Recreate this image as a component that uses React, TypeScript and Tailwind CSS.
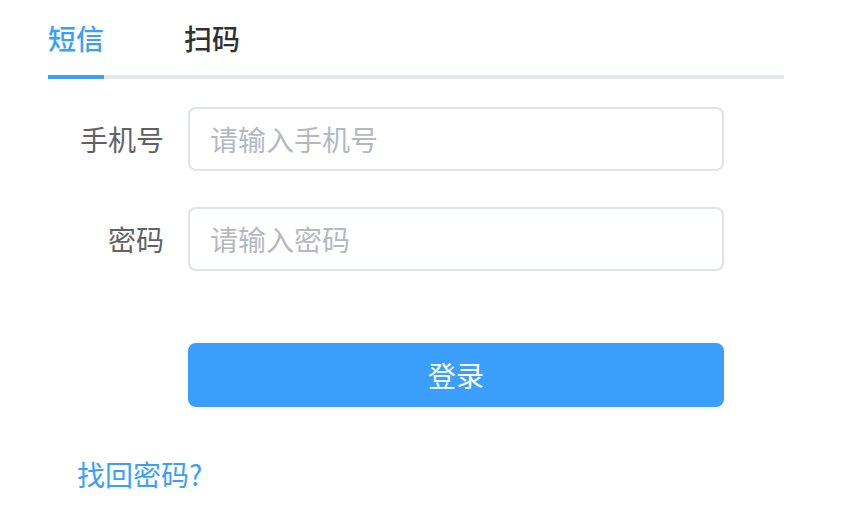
import { useState } from "react";

const font = { fontFamily: '"Noto Sans CJK SC", "Noto Sans", sans-serif' };

export default function App() {
  const [tab, setTab] = useState(0);
  const [phone, setPhone] = useState("");
  const [password, setPassword] = useState("");

  return (
    <div className="h-[522px] w-[846px] bg-white" style={font}>
      <div className="w-[784px] pl-[48px]">
        <div className="flex pt-[18px] pb-[17px] text-[28px] leading-[40px] font-medium">
          <button
            type="button"
            onClick={() => setTab(0)}
            className={tab === 0 ? "w-[56px] text-left text-[#3a9ffc]" : "w-[56px] text-left text-[#303133]"}
          >
            短信
          </button>
          <button
            type="button"
            onClick={() => setTab(1)}
            className={tab === 1 ? "ml-[80px] text-left text-[#3a9ffc]" : "ml-[80px] text-left text-[#303133]"}
          >
            扫码
          </button>
        </div>
        <div className="flex h-[4px]">
          <div className={tab === 0 ? "w-[56px] bg-[#3a9ffc]" : "w-[56px] bg-[#e4e7ed]"} />
          <div className="w-[80px] bg-[#e4e7ed]" />
          <div className={tab === 1 ? "w-[56px] bg-[#3a9ffc]" : "w-[56px] bg-[#e4e7ed]"} />
          <div className="flex-1 bg-[#e4e7ed]" />
        </div>
      </div>

      <div className="mt-[28px] flex flex-col gap-[36px] pl-[48px]">
        <div className="flex items-center">
          <label className="w-[116px] text-right text-[28px] text-[#606266]">手机号</label>
          <input
            value={phone}
            onChange={(e) => setPhone(e.target.value)}
            placeholder="请输入手机号"
            className="ml-[24px] h-[64px] w-[536px] rounded-[8px] border-2 border-[#dfe2e8] px-[20px] text-[28px] text-[#303133] outline-none placeholder:text-[#b5b8bf]"
          />
        </div>
        <div className="flex items-center">
          <label className="w-[116px] text-right text-[28px] text-[#606266]">密码</label>
          <input
            type="password"
            value={password}
            onChange={(e) => setPassword(e.target.value)}
            placeholder="请输入密码"
            className="ml-[24px] h-[64px] w-[536px] rounded-[8px] border-2 border-[#dfe2e8] px-[20px] text-[28px] text-[#303133] outline-none placeholder:text-[#b5b8bf]"
          />
        </div>
      </div>

      <div className="mt-[72px] pl-[188px]">
        <button
          type="button"
          className="h-[64px] w-[536px] rounded-[8px] bg-[#3a9ffc] text-[28px] text-white"
        >
          登录
        </button>
      </div>

      <div className="mt-[47px] pl-[77px]">
        <a href="#" className="text-[28px] leading-[40px] text-[#3a9ffc]">
          找回密码?
        </a>
      </div>
    </div>
  );
}
